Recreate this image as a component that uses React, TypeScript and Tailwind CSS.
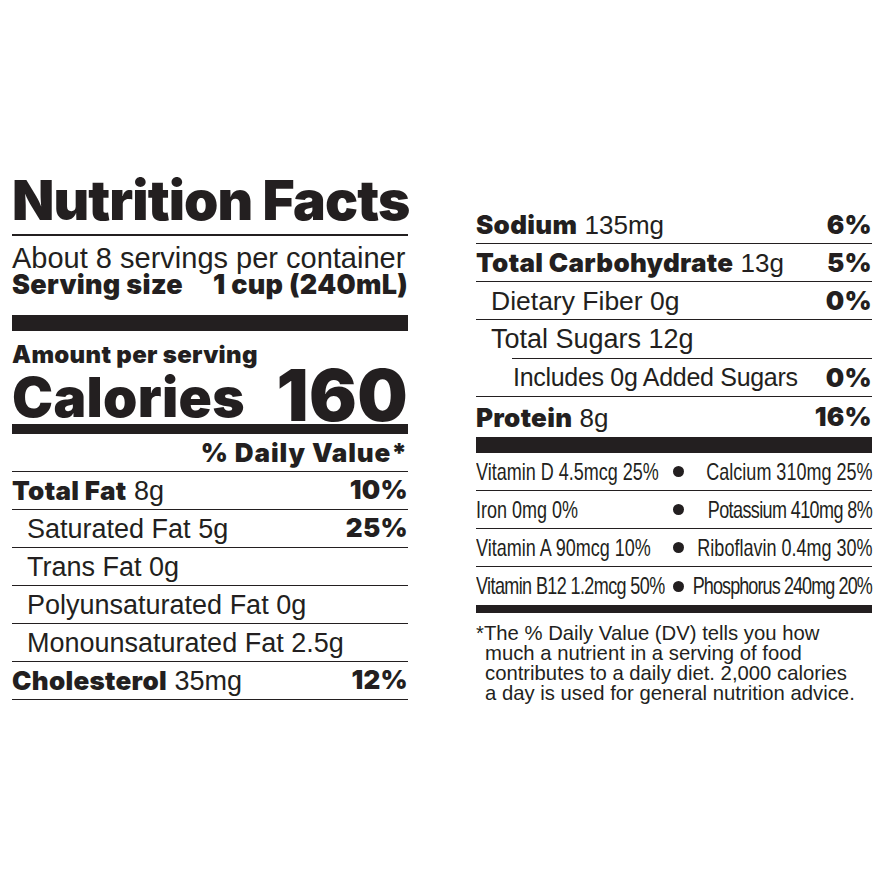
import React from "react";

const heavy = "font-['Inter','Liberation_Sans',sans-serif] font-black tracking-[0.3px]";
const light = "font-['Liberation_Sans','Arial',sans-serif] font-normal";
// condensed look for the vitamin rows: Arial metrics squeezed horizontally
const narrow =
  "font-['Liberation_Sans','Arial',sans-serif] font-normal text-[24px] leading-none whitespace-nowrap inline-block shrink-0 [transform:scaleX(0.75)]";

type Row = { name: string; amount: string; dv?: string; bold?: boolean; indent?: boolean; size?: string };

const leftRows: Row[] = [
  { name: "Total Fat", amount: "8g", dv: "10%", bold: true },
  { name: "Saturated Fat", amount: "5g", dv: "25%", indent: true },
  { name: "Trans Fat", amount: "0g", indent: true },
  { name: "Polyunsaturated Fat", amount: "0g", indent: true },
  { name: "Monounsaturated Fat", amount: "2.5g", indent: true },
  { name: "Cholesterol", amount: "35mg", dv: "12%", bold: true },
];

const vitamins = [
  { a: "Vitamin D 4.5mcg 25%", at: "", b: "Calcium 310mg 25%", bt: "" },
  { a: "Iron 0mg 0%", at: "", b: "Potassium 410mg 8%", bt: "tracking-[-0.8px]" },
  { a: "Vitamin A 90mcg 10%", at: "", b: "Riboflavin 0.4mg 30%", bt: "" },
  { a: "Vitamin B12 1.2mcg 50%", at: "tracking-[-0.8px]", b: "Phosphorus 240mg 20%", bt: "tracking-[-1.2px]" },
];

const NutrientRow = ({ row, border = true }: { row: Row; border?: boolean }) => (
  <div
    className={`flex items-center justify-between h-[38px] leading-none ${row.size ?? "text-[27px]"} ${
      border ? "border-b-[1.5px] border-[#231f20]" : ""
    } ${row.indent ? "pl-[15px]" : ""}`}
  >
    <span className="whitespace-nowrap">
      {row.bold ? <span className={`${heavy} text-[26px]`}>{row.name}</span> : <span className={light}>{row.name}</span>}
      <span className={light}> {row.amount}</span>
    </span>
    {row.dv && <span className={`${heavy} text-[26px]`}>{row.dv}</span>}
  </div>
);

export default function App() {
  return (
    <div className="w-[884px] h-[884px] bg-white text-[#231f20] flex gap-[68px] px-[12px] pt-[172px]">
      {/* left panel */}
      <div className="w-[396px] flex flex-col">
        <div className={`${heavy} text-[55px] leading-[56px] !tracking-[-0.9px] whitespace-nowrap`}>Nutrition Facts</div>
        <div className="h-[1.5px] bg-[#231f20] mt-[6px]" />
        <div className={`${light} text-[29px] leading-[28px] mt-[8px] whitespace-nowrap`}>About 8 servings per container</div>
        <div className={`${heavy} text-[27px] leading-[26px] flex justify-between whitespace-nowrap`}>
          <span>Serving size</span>
          <span>1 cup (240mL)</span>
        </div>
        <div className="h-[16px] bg-[#231f20] mt-[17px]" />
        <div className={`${heavy} text-[24px] leading-[24px] mt-[12px]`}>Amount per serving</div>
        <div className={`${heavy} flex justify-between items-end`}>
          <span className="text-[55px] leading-[52px]">Calories</span>
          <span className="text-[71px] leading-[56px]">160</span>
        </div>
        <div className="h-[10px] bg-[#231f20] mt-[1px]" />
        <div className={`${heavy} text-[26px] h-[38px] flex items-center justify-end border-b-[1.5px] border-[#231f20] !tracking-[0.9px]`}>
          % Daily Value*
        </div>
        {leftRows.map((r) => (
          <NutrientRow key={r.name} row={r} />
        ))}
      </div>

      {/* right panel */}
      <div className="w-[396px] flex flex-col pt-[34px]">
        <NutrientRow row={{ name: "Sodium", amount: "135mg", dv: "6%", bold: true, size: "text-[26px]" }} />
        <NutrientRow row={{ name: "Total Carbohydrate", amount: "13g", dv: "5%", bold: true, size: "text-[26px]" }} />
        <NutrientRow row={{ name: "Dietary Fiber", amount: "0g", dv: "0%", indent: true, size: "text-[26.5px]" }} />
        <div className="flex items-center h-[38px] pl-[15px] text-[27px] leading-none">
          <span className={light}>Total Sugars 12g</span>
        </div>
        <div className="ml-[36px] border-t-[1.5px] border-[#231f20]" />
        <div className="flex items-center justify-between h-[38px] pl-[37px] text-[25px] leading-none border-b-[1.5px] border-[#231f20]">
          <span className={`${light} whitespace-nowrap tracking-[-0.3px]`}>Includes 0g Added Sugars</span>
          <span className={`${heavy} text-[26px]`}>0%</span>
        </div>
        <div className="flex items-center justify-between h-[40px] text-[26px] leading-none">
          <span>
            <span className={heavy}>Protein</span>
            <span className={light}> 8g</span>
          </span>
          <span className={heavy}>16%</span>
        </div>
        <div className="h-[16px] bg-[#231f20]" />
        {vitamins.map((v, i) => (
          <div
            key={v.a}
            className={`flex items-center h-[38px] shrink-0 ${i < vitamins.length - 1 ? "border-b-[1.5px] border-[#231f20]" : ""}`}
          >
            <div className="w-[191px] shrink-0 flex justify-start">
              <span className={`${narrow} origin-left ${v.at}`}>{v.a}</span>
            </div>
            <div className="w-[22px] shrink-0 flex justify-center">
              <span className="w-[11px] h-[11px] rounded-full bg-[#231f20]" />
            </div>
            <div className="flex-1 min-w-0 flex justify-end">
              <span className={`${narrow} origin-right ${v.bt}`}>{v.b}</span>
            </div>
          </div>
        ))}
        <div className="h-[8px] bg-[#231f20]" />
        <p className={`${light} text-[20.3px] leading-[20px] mt-[10px] pl-[9px] -indent-[9px] whitespace-nowrap`}>
          *The % Daily Value (DV) tells you how
          <br />
          much a nutrient in a serving of food
          <br />
          contributes to a daily diet. 2,000 calories
          <br />a day is used for general nutrition advice.
        </p>
      </div>
    </div>
  );
}
